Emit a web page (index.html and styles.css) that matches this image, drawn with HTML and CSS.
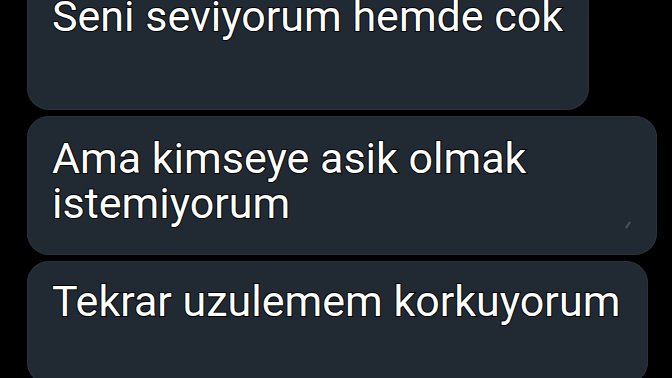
FILE: index.html
```html
<!DOCTYPE html>
<html lang="tr">
<head>
<meta charset="utf-8">
<title>Mesajlar</title>
<link rel="stylesheet" href="styles.css">
</head>
<body>
<main class="chat">
  <div class="bubble bubble-first"><p class="msg">Seni seviyorum hemde cok</p></div>
  <div class="bubble bubble-second"><p class="msg">Ama kimseye asik olmak istemiyorum</p><span class="mark"></span></div>
  <div class="bubble bubble-third"><p class="msg">Tekrar uzulemem korkuyorum</p></div>
</main>
</body>
</html>
```

FILE: styles.css
```css
html, body {
  margin: 0;
  padding: 0;
  background: #000;
  width: 672px;
  height: 378px;
  overflow: hidden;
}
.chat {
  display: flex;
  flex-direction: column;
  align-items: flex-start;
  gap: 6px;
  padding-left: 27px;
  margin-top: -28px;
}
.bubble {
  position: relative;
  box-sizing: border-box;
  max-width: 630px;
  background: #212a32;
  border-radius: 22px;
  padding: 20px 26px 29px 25px;
  box-shadow: inset 0 0 0 1px #2a333b;
}
.bubble-first {
  padding-top: 22px;
  padding-bottom: 71px;
}
.bubble-second {
  width: 630px;
}
.bubble-third {
  padding-top: 18px;
  padding-right: 28px;
  padding-bottom: 60px;
}
.msg {
  margin: 0;
  font-family: Roboto, "Liberation Sans", sans-serif;
  font-size: 43px;
  line-height: 45px;
  color: #fff;
  -webkit-text-stroke: 2px #000;
  paint-order: stroke fill;
}
.mark {
  position: absolute;
  right: 28px;
  bottom: 26px;
  width: 2px;
  height: 8px;
  background: #4a545c;
  transform: rotate(35deg);
  border-radius: 1px;
}
```
